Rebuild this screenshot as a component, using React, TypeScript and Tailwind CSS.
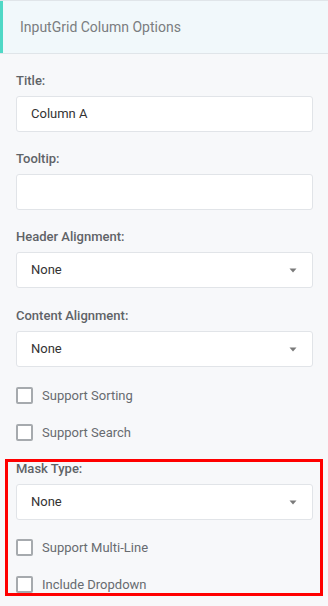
import React from 'react';

const font = { fontFamily: 'Roboto, "Noto Sans", sans-serif' };

const Label = ({ children }: { children: React.ReactNode }) => (
  <div className="mb-[7px] h-4 text-[13px] font-medium leading-4 text-[#5f6367]">{children}</div>
);

const TextInput = ({ value }: { value?: string }) => (
  <div className="flex h-[36px] items-center rounded-[3px] border border-[#e1e4e8] bg-white px-[14px] text-[13px] text-[#333]">
    {value}
  </div>
);

const Select = ({ value }: { value: string }) => (
  <div className="flex h-[36px] items-center justify-between rounded-[3px] border border-[#e1e4e8] bg-white pl-[14px] pr-[14px] text-[13px] text-[#333]">
    <span>{value}</span>
    <svg width="8" height="5" viewBox="0 0 8 5" className="mr-px">
      <path d="M0.5 0.5 H7.5 L4 4.5 Z" fill="#7a7a7a" />
    </svg>
  </div>
);

const Checkbox = ({ label }: { label: string }) => (
  <label className="flex h-[17px] items-center gap-[9px]">
    <span className="h-[17px] w-[17px] shrink-0 rounded-[2px] border-2 border-[#a6aaae] bg-white" />
    <span className="text-[13px] leading-4 text-[#676b70]">{label}</span>
  </label>
);

export default function App() {
  return (
    <div className="min-h-[606px] w-[328px] bg-[#f7f8fa]" style={font}>
      <div className="flex h-[54px] border-b border-t border-[#e0e5e9] bg-[#f1f8fb]">
        <div className="w-[3px] bg-[#4fd8c6]" />
        <div className="flex items-center pl-[17px] text-[14px] text-[#7a7d80]">InputGrid Column Options</div>
      </div>

      <div className="pl-4 pr-[15px] pt-[19px]">
        <Label>Title:</Label>
        <TextInput value="Column A" />

        <div className="mt-[19px]">
          <Label>Tooltip:</Label>
          <TextInput />
        </div>

        <div className="mt-[19px]">
          <Label>Header Alignment:</Label>
          <Select value="None" />
        </div>

        <div className="mt-[20px]">
          <Label>Content Alignment:</Label>
          <Select value="None" />
        </div>

        <div className="mt-[20px] flex flex-col gap-[20px]">
          <Checkbox label="Support Sorting" />
          <Checkbox label="Support Search" />
        </div>

        <div className="relative mt-[20px]">
          <Label>Mask Type:</Label>
          <Select value="None" />
          <div className="mt-[19px] flex flex-col gap-[20px]">
            <Checkbox label="Support Multi-Line" />
            <Checkbox label="Include Dropdown" />
          </div>
          {/* annotation box drawn over the section */}
          <div className="pointer-events-none absolute -bottom-[3px] -left-[11px] -right-[10px] -top-[2px] border-[3px] border-[#ff0000]" />
        </div>
      </div>
    </div>
  );
}
